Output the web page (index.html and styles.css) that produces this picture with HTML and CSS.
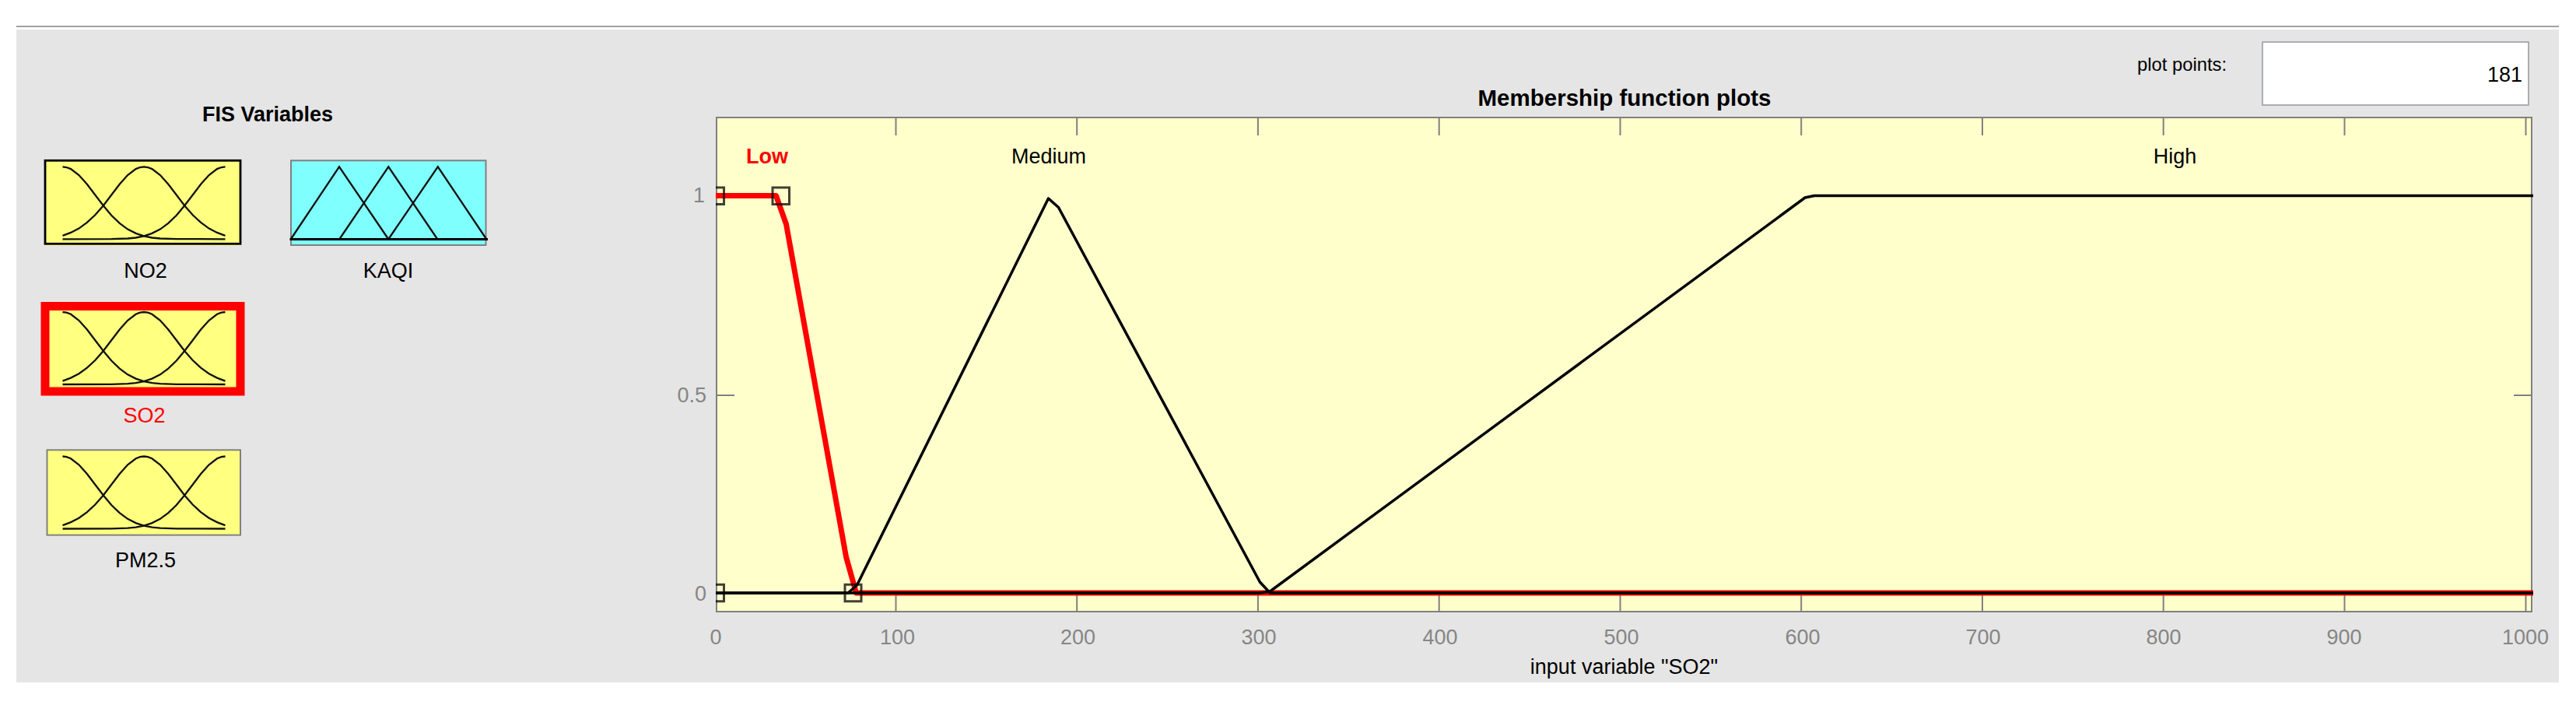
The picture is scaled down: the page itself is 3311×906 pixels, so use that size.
FILE: index.html
```html
<!DOCTYPE html>
<html lang="en">
<head>
<meta charset="utf-8">
<title>Membership Function Editor</title>
<link rel="stylesheet" href="styles.css">
</head>
<body>
<svg width="0" height="0" class="defs">
  <symbol id="gauss" viewBox="0 0 209 93" preserveAspectRatio="none" overflow="visible">
    <g class="curve">
      <path d="M0 0L5 .7L10.5 2.8L20.9 10.8L31.4 22.5L41.8 36.2L52.3 50L62.7 62.5L73.2 72.6L83.6 80.3L94.1 85.6L104.5 89.1L115 91.2L125.4 92.2L146.3 92.8L209 93"/>
      <path d="M209 0L204 .7L198.5 2.8L188.1 10.8L177.6 22.5L167.2 36.2L156.7 50L146.3 62.5L135.8 72.6L125.4 80.3L114.9 85.6L104.5 89.1L94 91.2L83.6 92.2L62.7 92.8L0 93"/>
      <path d="M0 88.6L10.5 84.6L20.9 79.3L31.4 71.6L41.8 62L52.3 50L62.7 36.2L73.2 22.5L83.6 10.8L94.1 2.8L99.5 .7L104.5 0L109.5 .7L114.9 2.8L125.4 10.8L135.8 22.5L146.3 36.2L156.7 50L167.2 62L177.6 71.6L188.1 79.3L198.5 84.6L209 88.6"/>
    </g>
  </symbol>
</svg>
<main class="panel">
  <section class="variables">
    <h2 class="variables-title">FIS Variables</h2>
    <div class="columns">
      <div class="column">
        <figure class="variable">
          <svg class="thumb" viewBox="0 0 270 120">
            <rect x="12" y="10" width="252" height="108.500" class="yellow"/>
            <rect x="13" y="9.300" width="251" height="107" class="edge-black"/>
            <use href="#gauss" x="35.500" y="17.300" width="209" height="93"/>
          </svg>
          <figcaption class="name">NO2</figcaption>
        </figure>
        <figure class="variable">
          <svg class="thumb" viewBox="0 0 270 120">
            <rect x="13" y="10.500" width="251" height="109.500" class="yellow edge-red"/>
            <use href="#gauss" x="35.500" y="18" width="209" height="93"/>
          </svg>
          <figcaption class="name selected">SO2</figcaption>
        </figure>
        <figure class="variable">
          <svg class="thumb" viewBox="0 0 270 120">
            <rect x="15.500" y="9.300" width="248.500" height="109.300" class="yellow edge-gray"/>
            <use href="#gauss" x="35.500" y="17.500" width="209" height="93"/>
          </svg>
          <figcaption class="name">PM2.5</figcaption>
        </figure>
      </div>
      <div class="column">
        <figure class="variable">
          <svg class="thumb" viewBox="0 0 270 120">
            <rect x="14" y="9.300" width="250.500" height="108.700" class="cyan edge-gray"/>
            <path class="curve" d="M14 110L76 17.300L139 110M76.500 110L139.300 17.300L202 110M139.500 110L202.800 17.300L265 110"/>
            <path class="baseline" d="M12.500 110.400H267"/>
          </svg>
          <figcaption class="name output">KAQI</figcaption>
        </figure>
      </div>
    </div>
  </section>
  <section class="plot-area">
    <div class="plot-head">
      <h2 class="plot-title">Membership function plots</h2>
      <label class="points-label" for="points">plot points:</label>
      <input class="points" id="points" type="text" value="181">
    </div>
    <svg class="plot" viewBox="840 140 2449 737">
      <defs><clipPath id="inside"><rect x="920" y="140" width="2336" height="660"/></clipPath></defs>
      <rect class="axes" x="921" y="151" width="2333" height="635"/>
      <path class="ticks" d="M1151.500 151v23M1384.200 151v23M1616.900 151v23M1849.700 151v23M2082.500 151v23M2315.200 151v23M2548 151v23M2780.700 151v23M3013.500 151v23M3246.500 151v23M1151.500 786v-23M1384.200 786v-23M1616.900 786v-23M1849.700 786v-23M2082.500 786v-23M2315.200 786v-23M2548 786v-23M2780.700 786v-23M3013.500 786v-23M3246.500 786v-23M921 508h23M3254 508h-23M921 251.700h23M921 762h23"/>
      <g clip-path="url(#inside)">
        <path class="low" d="M920 251.500H997.500L1010.500 288L1087.600 716L1100.500 762H3256"/>
        <path class="mf" d="M920 762H1090L1101.500 752L1347.500 255L1360.500 266.500L1619.400 748L1632.400 762H3256"/>
        <path class="mf" d="M920 762H1619.400L1632.400 760L2320 254L2332 251.500H3256"/>
        <path class="handle" d="M908 241h22.500v21.500h-22.500zM993 241h21.500v21.500h-21.500zM908 751.300h22.500v21.500h-22.500zM1086 751.300h21v21.500h-21z"/>
      </g>
      <g class="mf-label">
        <text class="low-label" x="986" y="210">Low</text>
        <text x="1348" y="210">Medium</text>
        <text x="2795.500" y="210">High</text>
        <text x="2087.500" y="865.500">input variable "SO2"</text>
      </g>
      <g class="ylabels"><text x="906" y="260">1</text><text x="908" y="516.500">0.5</text><text x="908" y="771.500">0</text></g>
      <g class="xlabels">
        <text x="920" y="827.700">0</text><text x="1153.500" y="827.700">100</text><text x="1385.500" y="827.700">200</text><text x="1618" y="827.700">300</text><text x="1851" y="827.700">400</text><text x="2084" y="827.700">500</text><text x="2317" y="827.700">600</text><text x="2549" y="827.700">700</text><text x="2781" y="827.700">800</text><text x="3013" y="827.700">900</text><text x="3246" y="827.700">1000</text>
      </g>
    </svg>
  </section>
</main>
</body>
</html>
```
FILE: styles.css
```css
* { box-sizing: border-box; }
body { margin: 0; background: #fff; font-family: "Liberation Sans", Arial, sans-serif; font-size: 27px; color: #000; }
.defs { display: block; }
.panel { display: flex; width: 3268px; height: 844px; margin: 33px 0 0 21px; padding-top: 5px; background: linear-gradient(#a0a0a0 0 2px, #fff 2px 5px, #e5e5e5 5px); }
.variables { width: 819px; padding-left: 24px; }
.variables-title { width: 598px; margin: 93px 0 0; font-size: 27px; line-height: 32px; text-align: center; }
.columns { display: flex; gap: 45px; margin-top: 34px; }
.column { width: 270px; }
.variable { height: 186px; margin: 0; }
.thumb { display: block; width: 270px; height: 120px; overflow: visible; }
.name { margin-top: 15px; padding-left: 14px; line-height: 32px; text-align: center; }
.selected { padding-left: 11px; color: #f00; }
.output { padding-left: 8px; }
.yellow { fill: #ffff80; }
.cyan { fill: #80ffff; }
.edge-black { fill: none; stroke: #000; stroke-width: 2.8px; }
.edge-red { stroke: #f00; stroke-width: 11px; }
.edge-gray { stroke: #808080; stroke-width: 2px; }
.curve { fill: none; stroke: #111; stroke-width: 2.3px; }
.baseline { stroke: #000; stroke-width: 3px; }
.plot-area { display: flex; flex-direction: column; width: 2449px; }
.plot-head { display: flex; height: 102px; }
.plot-title { width: 436px; margin: 71px 0 0 1030px; font-size: 29.5px; line-height: 34px; text-align: center; white-space: nowrap; }
.points-label { width: 119px; margin: 31px 0 0 441px; font-size: 23.8px; line-height: 28px; white-space: nowrap; }
.points { width: 344px; height: 83px; margin: 15px 0 0 41px; padding: 3px 7px 0 0; border: 2px solid #abadb3; border-radius: 0; background: #fff; font: 27px "Liberation Sans", Arial, sans-serif; color: #000; text-align: right; }
.plot { display: block; width: 2449px; height: 737px; }
.axes { fill: #ffc; stroke: #808080; stroke-width: 2px; }
.ticks { fill: none; stroke: #808080; stroke-width: 2px; }
.low { fill: none; stroke: #f00; stroke-width: 7px; stroke-linejoin: round; }
.mf { fill: none; stroke: #000; stroke-width: 3.5px; stroke-linejoin: round; }
.handle { fill: none; stroke: #000; stroke-opacity: .75; stroke-width: 3px; }
.mf-label { text-anchor: middle; fill: #000; }
.low-label { fill: #f00; font-weight: bold; }
.ylabels { text-anchor: end; fill: #868686; }
.xlabels { text-anchor: middle; fill: #868686; }
```
